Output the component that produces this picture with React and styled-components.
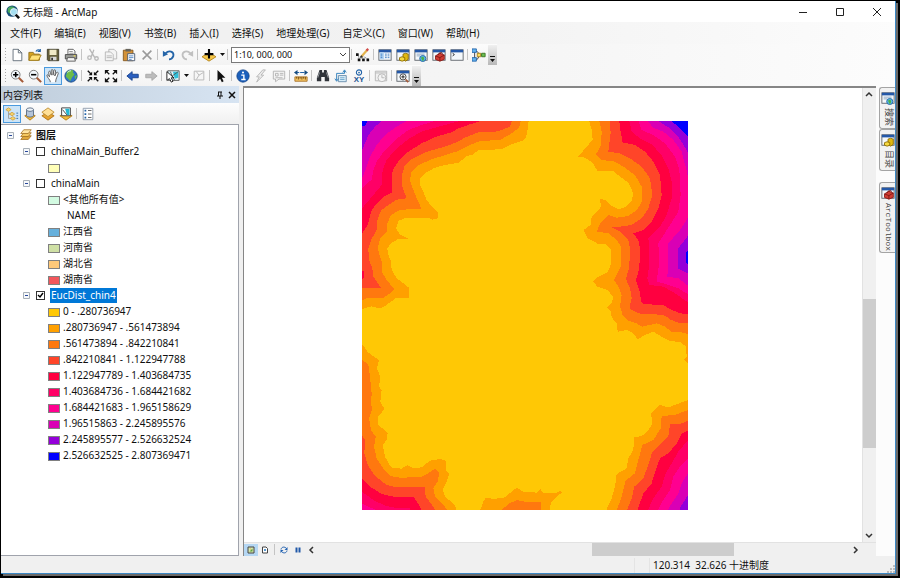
import React, { useState } from 'react';
import styled, { createGlobalStyle } from 'styled-components';

const GlobalStyle = createGlobalStyle`
  * {
    box-sizing: border-box;
  }

  body {
    margin: 0;
    background: #000000;
    color: #101010;
    font-family: 'Noto Sans', 'Noto Sans CJK SC', sans-serif;
    font-size: 10px;
    line-height: 16px;
  }

  button,
  select,
  input {
    margin: 0;
    padding: 0;
    border: none;
    background: none;
    color: inherit;
    font: inherit;
  }
`;

const Desktop = styled.div`
  height: 100vh;
  padding: 1px 4px 4px 1px;
  background: #000000;
`;

const Window = styled.div`
  display: flex;
  flex-direction: column;
  height: 100%;
  background: #f0f0f0;
  border-right: 1px solid #3a87c4;
  border-bottom: 1px solid #3a87c4;
  box-shadow: 2px 2px 0 #6a6a6a;
`;

const TitleBar = styled.header`
  display: flex;
  align-items: center;
  height: 21px;
  padding-left: 5px;
  gap: 3px;
  background: #ffffff;
`;

const Title = styled.h1`
  flex: 1;
  margin: 0;
  font-size: 10px;
  font-weight: 400;
`;

const WindowControls = styled.div`
  display: flex;
`;

const WindowButton = styled.button`
  display: flex;
  align-items: center;
  justify-content: center;
  width: 37px;
  height: 20px;
`;

const MenuBar = styled.nav`
  display: flex;
  align-items: center;
  gap: 1px;
  height: 22px;
  padding-left: 3px;
  background: linear-gradient(to right, #f0f0f0, #f2f2f2 50%, #fcfcfc);
`;

const MenuItem = styled.button`
  padding: 0 6px;
  white-space: nowrap;
`;

const ToolbarArea = styled.div`
  background: linear-gradient(to right, #f2f2f2, #f4f4f4 50%, #fcfcfc);
`;

const ToolbarRow = styled.div`
  display: flex;
  align-items: center;
  width: max-content;
  height: 21px;
  background: linear-gradient(to bottom, #fcfcfc, #f3f3f3);
`;

const Grip = styled.span`
  width: 7px;
  height: 14px;
  border-left: 4px solid transparent;
  background: repeating-linear-gradient(to bottom, #a8a8a8 0 1px, transparent 1px 3px) 0 0 / 1px 100% no-repeat;
`;

const Separator = styled.span`
  width: 1px;
  height: 11px;
  margin: 0 2px 0 ${(props) => (props.$wide ? '2px' : '1px')};
  background: #c4c4c4;
`;

const ToolButton = styled.button`
  display: flex;
  align-items: center;
  justify-content: center;
  width: 18px;
  height: 18px;
  border: 1px solid ${(props) => (props.$active ? '#4a9ade' : 'transparent')};
  background: ${(props) => (props.$active ? '#cce4f7' : 'transparent')};
`;

const CaretButton = styled.button`
  display: flex;
  align-items: center;
  justify-content: center;
  width: 8px;
  height: 18px;
`;

const OverflowButton = styled.button`
  display: flex;
  align-items: flex-end;
  justify-content: center;
  width: 9px;
  height: 20px;
  padding-bottom: 2px;
  background: linear-gradient(to bottom, #f0f0f0, #b8b8b8);
`;

const ScaleBox = styled.select`
  appearance: none;
  width: 119px;
  height: 16px;
  margin-left: 1px;
  padding-left: 2px;
  border: 1px solid #7a7a7a;
  background: #ffffff
    url("data:image/svg+xml,%3Csvg xmlns='http://www.w3.org/2000/svg' width='8' height='5'%3E%3Cpath d='M1 1l3 3 3-3' fill='none' stroke='%23444'/%3E%3C/svg%3E")
    no-repeat right 2px center;
  font-size: 9px;
  line-height: 14px;
`;

const Workspace = styled.main`
  display: flex;
  flex: 1;
  min-height: 0;
`;

const ContentsPanel = styled.aside`
  display: flex;
  flex-direction: column;
  flex: none;
  width: 238px;
`;

const PanelHeader = styled.header`
  display: flex;
  align-items: center;
  height: 17px;
  padding: 0 1px 0 2px;
  background: linear-gradient(to right, #bfcddb, #d7e4f2);
`;

const PanelTitle = styled.h2`
  flex: 1;
  margin: 0;
  font-size: 10px;
  font-weight: 400;
`;

const PanelButton = styled.button`
  display: flex;
  align-items: center;
  justify-content: center;
  width: 12px;
  height: 14px;
`;

const PanelTools = styled.div`
  display: flex;
  align-items: center;
  height: 21px;
  padding-left: 2px;
  background: linear-gradient(to bottom, #fdfdfd, #f0f0f0);
`;

const Tree = styled.div`
  flex: 1;
  min-height: 0;
  padding-top: 2px;
  overflow: hidden;
  border: 1px solid #a0a3ac;
  border-left: none;
  background: #ffffff;
`;

const TreeRow = styled.div`
  display: flex;
  align-items: center;
  height: 16px;
  padding-left: ${(props) => props.$indent}px;
  white-space: nowrap;
`;

const Expander = styled.button`
  display: flex;
  width: 7px;
  height: 7px;
  margin-right: 6px;
`;

const RootLabel = styled.span`
  margin-left: 4px;
  font-weight: 700;
`;

const LayerCheck = styled.input`
  appearance: none;
  width: 9px;
  height: 9px;
  border: 1px solid #333333;
  background: #ffffff;

  &:checked {
    background: #ffffff
      url("data:image/svg+xml,%3Csvg xmlns='http://www.w3.org/2000/svg' width='7' height='7'%3E%3Cpath d='M1 3l2 2 3-4' fill='none' stroke='%23000' stroke-width='1.4'/%3E%3C/svg%3E")
      no-repeat center;
  }
`;

const LayerLabel = styled.label`
  height: 15px;
  margin-left: 5px;
  padding: 0 1px;
  line-height: 15px;
  color: ${(props) => (props.$selected ? '#ffffff' : 'inherit')};
  background: ${(props) => (props.$selected ? '#0078d7' : 'transparent')};
`;

const Swatch = styled.span`
  width: 12px;
  height: 9px;
  margin: 2px 3px 0 0;
  border: 1px solid #808080;
  background: ${(props) => props.$color};
`;

const MapPane = styled.section`
  display: flex;
  flex-direction: column;
  flex: 1;
  min-width: 0;
  margin-left: 4px;
  border-top: 2px solid #868686;
  border-left: 1px solid #868686;
`;

const MapRow = styled.div`
  display: flex;
  flex: 1;
  min-height: 0;
`;

const MapCanvas = styled.div`
  flex: 1;
  min-width: 0;
  padding: 33px 0 0 118px;
  overflow: hidden;
  background: #ffffff;
`;

const Raster = styled.svg`
  display: block;
  width: 326px;
  height: 389px;
`;

const VerticalBar = styled.div`
  display: flex;
  flex-direction: column;
  width: 14px;
  border-left: 1px solid #e2e2e2;
`;

const BottomBar = styled.div`
  display: flex;
  align-items: center;
  height: 14px;
  padding-right: 14px;
  border-top: 1px solid #e2e2e2;
`;

const BarArrow = styled.button`
  display: flex;
  align-items: center;
  justify-content: center;
  flex: none;
  width: 12px;
  height: 12px;
`;

const Track = styled.div`
  flex: ${(props) => props.$grow};
`;

const Thumb = styled.div`
  flex: ${(props) => props.$grow};
  align-self: stretch;
  background: #cdcdcd;
`;

const ViewButton = styled.button`
  display: flex;
  align-items: center;
  justify-content: center;
  width: 14px;
  height: 12px;
  background: ${(props) => (props.$active ? '#b5d7f3' : 'transparent')};
`;

const Dock = styled.aside`
  display: flex;
  flex-direction: column;
  align-items: flex-end;
  flex: none;
  width: 19px;
  padding-top: 1px;
  background: #fcfcfc;
`;

const DockTab = styled.button`
  display: flex;
  flex-direction: column;
  align-items: center;
  gap: 3px;
  width: 16px;
  height: ${(props) => props.$length}px;
  margin-top: ${(props) => (props.$apart ? '11px' : '0')};
  padding-top: 3px;
  border: 1px solid #a4a4a4;
  border-right: none;
  border-radius: 3px 0 0 3px;
  background: #f2f2f2;
`;

const DockLabel = styled.span`
  writing-mode: vertical-rl;
  text-orientation: sideways;
  color: #444444;
  font-family: 'Liberation Mono', 'Noto Sans CJK SC', monospace;
  font-size: ${(props) => (props.$latin ? '8px' : '9px')};
  line-height: 12px;
`;

const StatusBar = styled.footer`
  display: flex;
  align-items: flex-end;
  height: 17px;
  background: #f0f0f0;
`;

const StatusSpacer = styled.div`
  flex: 1;
`;

const StatusCell = styled.div`
  width: 16px;
  height: 15px;
  border: 1px solid #e4e4e4;
  border-width: 0 1px;
`;

const StatusText = styled.output`
  width: 237px;
  padding-left: 3px;
  line-height: 15px;
  white-space: pre;
`;

const COLORS = ['#ffc805', '#ffa000', '#ff780f', '#ff4529', '#ff0040', '#ff0066', '#ff0090', '#d900b5', '#9400d9', '#0000ff'];

const RANGES = [
  '0 - .280736947',
  '.280736947 - .561473894',
  '.561473894 - .842210841',
  '.842210841 - 1.122947788',
  '1.122947789 - 1.403684735',
  '1.403684736 - 1.684421682',
  '1.684421683 - 1.965158629',
  '1.96515863 - 2.245895576',
  '2.245895577 - 2.526632524',
  '2.526632525 - 2.807369471',
];

const PROVINCES = [
  ['江西省', '#66b0dc'],
  ['河南省', '#cfe0a5'],
  ['湖北省', '#ffc97a'],
  ['湖南省', '#f2575c'],
];

const MENUS = ['文件(F)', '编辑(E)', '视图(V)', '书签(B)', '插入(I)', '选择(S)', '地理处理(G)', '自定义(C)', '窗口(W)', '帮助(H)'];

// Distance bands, one list per corner; entries are [class index, points]
const TOP_LEFT = [
  [1, '21,18 521,18 517,50 513,68 505,76 470,88 440,102 400,105 370,105 355,118 335,123 312,143 270,150 240,158 215,172 195,190 195,210 205,230 215,255 235,280 248,292 248,310 232,314 220,309 150,309 130,318 123,340 135,358 150,366 162,373 130,372 108,385 97,400 100,420 108,440 110,465 125,490 145,505 162,518 162,548 125,548 105,562 85,577 70,579 50,574 21,582'],
  [2, '21,18 497,18 492,38 470,55 435,75 375,78 340,92 310,108 265,122 230,133 190,150 170,170 165,195 175,225 185,250 200,282 175,283 135,284 108,300 97,325 95,350 75,372 68,400 75,425 82,445 80,470 95,495 117,522 105,535 85,548 40,548 21,556'],
  [3, '21,18 470,18 465,35 440,45 420,50 370,52 330,68 305,82 270,95 210,112 170,133 148,155 140,185 142,215 155,250 125,254 100,270 80,285 68,310 65,345 48,375 40,400 42,435 52,460 55,485 78,518 21,519'],
  [4, '21,18 378,18 345,28 310,40 290,52 240,66 200,85 160,110 130,140 113,165 110,200 112,233 90,243 65,265 48,290 38,330 21,355'],
  [4, '21,468 27,470 27,490 21,492'],
  [5, '21,18 315,18 250,35 200,50 160,72 120,105 95,135 83,165 80,210 55,240 40,258 21,280'],
  [6, '21,18 240,18 200,30 160,45 120,75 90,105 65,140 55,165 50,195 35,205 21,222'],
  [7, '21,18 155,18 125,35 90,60 65,90 45,125 33,160 21,190'],
  [8, '21,18 80,18 60,35 40,60 30,85 21,105'],
  [9, '21,18 38,18 30,32 21,35'],
];

const TOP_RIGHT = [
  [1, '504,18 208,18 215,45 218,75 200,95 175,125 195,128 220,145 232,168 280,168 300,185 325,203 340,235 335,258 318,275 295,283 270,270 255,255 240,252 243,275 232,290 215,305 212,330 190,345 203,370 220,378 235,388 258,388 273,405 272,450 262,472 235,485 220,500 232,515 262,525 280,545 275,565 262,577 273,590 275,607 290,625 293,650 320,645 340,655 353,673 375,660 400,650 425,665 450,679 480,680 498,695 500,725 492,735 504,745'],
  [2, '504,18 238,18 245,50 243,90 228,118 245,135 285,140 310,155 345,180 365,215 366,260 350,285 325,303 290,308 265,300 240,325 230,350 265,355 290,375 303,395 302,455 282,495 298,520 305,540 300,575 308,600 325,617 345,623 367,635 410,625 435,635 455,650 490,653 504,658'],
  [3, '504,18 270,18 272,55 265,110 300,115 330,130 365,155 390,190 397,240 385,280 365,310 335,330 300,335 275,337 300,350 325,375 330,400 328,455 318,492 330,520 335,550 328,580 345,590 365,598 400,597 435,602 450,613 475,623 504,625'],
  [4, '504,18 298,18 302,50 308,82 345,90 375,110 400,140 420,180 425,240 415,280 395,320 370,345 340,355 355,375 360,400 358,460 348,495 358,525 365,565 400,569 430,570 450,582 480,595 504,597'],
  [5, '504,18 328,18 335,50 360,70 395,88 425,120 445,160 455,200 455,250 440,300 420,335 385,370 388,400 387,455 382,490 388,510 430,515 465,535 504,562'],
  [6, '504,18 355,18 365,45 400,60 435,85 465,125 478,165 482,240 475,290 450,330 415,385 418,440 410,500 440,508 475,520 504,538'],
  [7, '504,18 383,18 400,38 430,50 460,75 485,110 498,160 504,185'],
  [7, '504,308 480,345 445,385 445,440 442,485 475,490 504,512'],
  [8, '504,18 415,18 450,40 475,65 504,112'],
  [8, '504,362 475,400 474,460 504,475'],
  [9, '504,18 455,18 480,40 504,65'],
  [9, '504,408 499,412 499,445 504,447'],
];

const BOTTOM_LEFT = [
  [1, '21,102 40,128 72,150 66,175 76,200 72,230 80,240 76,275 88,297 70,320 70,345 98,368 95,390 83,405 90,440 108,472 140,476 157,465 175,475 200,472 225,452 255,447 272,452 272,480 283,490 275,515 263,540 270,560 300,585 305,602 21,602'],
  [2, '21,148 40,165 45,200 50,250 48,280 52,297 42,325 48,360 62,380 57,410 65,445 85,475 105,498 140,504 160,502 200,500 220,490 240,476 253,490 248,515 235,535 240,560 262,580 278,602 21,602'],
  [3, '21,375 30,390 28,430 38,465 60,498 95,525 125,532 210,532 212,560 235,590 240,602 21,602'],
  [4, '21,505 45,530 80,552 125,562 175,560 190,582 200,602 21,602'],
  [5, '21,545 55,570 90,587 125,594 165,595 168,602 21,602'],
  [6, '21,580 45,592 70,602 21,602'],
  [1, '375,602 385,575 393,563 415,567 450,562 470,545 485,533 505,545 545,548 557,538 565,550 600,550 615,543 622,546 605,560 587,580 585,602'],
  [2, '438,602 460,582 485,570 510,575 557,575 559,602'],
];

const BOTTOM_RIGHT = [
  [1, '504,270 470,283 445,292 420,285 393,310 397,340 385,362 365,378 342,382 340,420 325,445 320,475 290,492 285,530 275,565 258,602 504,602'],
  [2, '504,300 465,315 425,318 422,355 400,390 367,405 355,450 345,490 317,512 305,560 290,602 504,602'],
  [3, '504,332 480,342 450,343 445,380 420,405 397,425 385,465 370,505 343,530 335,565 320,602 504,602'],
  [4, '504,362 485,370 470,400 445,430 420,445 407,480 395,520 370,550 352,602 504,602'],
  [5, '504,390 475,425 455,460 437,490 425,530 400,565 383,602 504,602'],
  [6, '504,445 480,470 460,500 450,540 430,570 412,602 504,602'],
  [7, '504,490 485,520 475,550 455,580 443,602 504,602'],
  [8, '504,555 485,585 477,602 504,602'],
];

const Bands = ({ x, y, items }) => (
  <g transform={`translate(${x} ${y})`}>
    {items.map(([level, points]) => (
      <polygon key={points} points={points} fill={COLORS[level]} />
    ))}
  </g>
);

const DistanceRaster = () => (
  <Raster viewBox="0 0 978 1167" shapeRendering="crispEdges" role="img" aria-label="EucDist_chin4">
    <rect width="978" height="1167" fill={COLORS[0]} />
    <Bands x={-21} y={-18} items={TOP_LEFT} />
    <Bands x={474} y={-18} items={TOP_RIGHT} />
    <Bands x={-21} y={567} items={BOTTOM_LEFT} />
    <Bands x={474} y={567} items={BOTTOM_RIGHT} />
  </Raster>
);

const Svg = ({ size = 14, box = 16, children }) => (
  <svg width={size} height={size} viewBox={`0 0 ${box} ${box}`} fill="none" aria-hidden="true">
    {children}
  </svg>
);

const WindowFrame = ({ children }) => (
  <>
    <rect x="1" y="2" width="14" height="12" fill="#f4f8fb" stroke="#5a6068" />
    <path d="M1 2h14v3H1z" fill="#2458a8" />
    {children}
  </>
);

const icons = {
  blank: <path d="M3.5 1.5h6l4 4v9h-10zM9.5 1.5v4h4" fill="#fff" stroke="#5c6874" />,
  open: (
    <>
      <path d="M1 14V5h5l1 2h6v7z" fill="#d9a520" stroke="#8a6a18" />
      <path d="M1 14l3-6h11l-3 6z" fill="#ffe27a" stroke="#a07a18" />
      <path d="M9 4c2-3 4-2 5 0m0-3v3h-3" stroke="#2464a8" strokeWidth="1.4" />
    </>
  ),
  save: (
    <>
      <path d="M1.5 1.5h13v13h-12l-1-1z" fill="#66603c" stroke="#3a3828" />
      <path d="M4 2h8v6H4z" fill="#efe9c8" />
      <path d="M5 10h7v4H5z" fill="#d8d8d8" />
      <path d="M6 11h2v3H6z" fill="#333" />
    </>
  ),
  print: (
    <>
      <path d="M4.5 7V1.5h6l2 2V7" fill="#fff" stroke="#555" />
      <path d="M6 4h4M6 6h5" stroke="#888" />
      <path d="M1.5 7.5h13v5h-13z" fill="#9a9c98" stroke="#444" />
      <path d="M4 11h8l1 4H3z" fill="#f4f4f4" stroke="#555" />
      <path d="M11 9h2" stroke="#f0dc50" strokeWidth="1.5" />
    </>
  ),
  cut: (
    <g stroke="#b8b8b8" strokeWidth="1.5">
      <path d="M4 1l6 10M9 2L6 10" />
      <circle cx="4" cy="11" r="2" />
      <circle cx="12" cy="12" r="2" />
    </g>
  ),
  copy: (
    <g fill="#f4f4f4" stroke="#b4b4b4">
      <path d="M5.5 1.5h6l3 3v8h-9z" />
      <path d="M1.5 4.5h6l3 3v7h-9zM3 9h6M3 11h6" />
    </g>
  ),
  paste: (
    <>
      <path d="M1.5 2.5h11v12h-11z" fill="#d39238" stroke="#80561e" />
      <path d="M4 1h6v3H4z" fill="#66645c" />
      <path d="M6.5 6.5h8v8h-8z" fill="#fff" stroke="#46566c" />
      <path d="M8 9h5M8 11h5M8 13h3" stroke="#4a80c0" />
    </>
  ),
  remove: <path d="M3 3l10 10M13 3L3 13" stroke="#9a9a9a" strokeWidth="1.8" />,
  undo: (
    <>
      <path d="M4 6c4-4 10-2 9 3-1 3-3 4-5 4" stroke="#2464a8" strokeWidth="2" />
      <path d="M1 3v7l6-3z" fill="#2464a8" />
    </>
  ),
  redo: (
    <>
      <path d="M12 6C8 2 2 4 3 9c1 3 3 4 5 4" stroke="#c0c0c0" strokeWidth="2" />
      <path d="M15 3v7L9 7z" fill="#c0c0c0" />
    </>
  ),
  addData: (
    <>
      <path d="M0 10l8-5 8 5-8 5z" fill="#f7c84a" stroke="#b08018" />
      <path d="M8 1v11M3 7h10" stroke="#000" strokeWidth="2.4" />
    </>
  ),
  edit: (
    <>
      <path d="M2 7l2 6 5-3 5 3" stroke="#555" strokeDasharray="1 1" />
      <path d="M0 6h3v3H0zM2 12h3v3H2zM7 12h3v3H7zM12 12h3v3h-3z" fill="#111" />
      <path d="M6 10l7-8" stroke="#e4b34c" strokeWidth="2.5" />
      <path d="M12 3l2-2" stroke="#d14b4b" strokeWidth="2.5" />
      <path d="M5 11l2-2" stroke="#333" strokeWidth="2" />
    </>
  ),
  contents: (
    <WindowFrame>
      <path d="M2 5h5v8H2z" fill="#b4d6f4" />
      <path d="M3 7h3M3 9h3M3 11h3M8 7h6M8 9h6M8 11h6" stroke="#3c7cc0" strokeDasharray="2 1" />
    </WindowFrame>
  ),
  catalog: (
    <WindowFrame>
      <path d="M8 7l3-1 3 1v6l-3 2-3-2z" fill="#e0b810" stroke="#8a6c04" />
      <path d="M4 11l3-1 3 1v3l-3 1-3-1z" fill="#f5d840" stroke="#8a6c04" />
    </WindowFrame>
  ),
  search: (
    <WindowFrame>
      <path d="M3 7h9M3 9h4" stroke="#8aa4c0" />
      <circle cx="10" cy="12" r="3.5" fill="#58b8e0" stroke="#2464a8" />
      <path d="M8 11c3-3 5 1 2 4z" fill="#4cb048" />
    </WindowFrame>
  ),
  toolbox: (
    <WindowFrame>
      <path d="M4 9l5-3 5 2v5l-5 2-5-2z" fill="#d23c32" stroke="#8c1c18" />
      <path d="M4 9l5 2 5-3M9 11v4M7 8l1-2 3-1 1 2" stroke="#7c1814" />
    </WindowFrame>
  ),
  python: (
    <WindowFrame>
      <path d="M3 6l2 1.5L3 9" stroke="#111" />
    </WindowFrame>
  ),
  model: (
    <>
      <path d="M3 3v10M3 4h3l3 4h4M3 13h3l3-5" stroke="#333" />
      <path d="M0 1h5v4H0zM0 11h5v4H0z" fill="#66b5f0" stroke="#2464a8" />
      <path d="M6 6h4v4H6z" fill="#ffe060" stroke="#a07a18" />
      <path d="M11 6h4v4h-4z" fill="#6ac050" stroke="#387020" />
    </>
  ),
  zoomIn: (
    <>
      <circle cx="6.5" cy="6.5" r="5" fill="#f2f8fd" stroke="#6e6e6e" />
      <path d="M10 10l5 5" stroke="#a45a38" strokeWidth="2.4" />
      <path d="M3.5 6.5h6M6.5 3.5v6" stroke="#000" strokeWidth="1.8" />
    </>
  ),
  zoomOut: (
    <>
      <circle cx="6.5" cy="6.5" r="5" fill="#f2f8fd" stroke="#6e6e6e" />
      <path d="M10 10l5 5" stroke="#a45a38" strokeWidth="2.4" />
      <path d="M3.5 6.5h6" stroke="#000" strokeWidth="1.8" />
    </>
  ),
  pan: (
    <path
      d="M5 15c0-3-4-5-4-8 1-1 2 0 3 2L3 4c0-2 2-2 2 0l1 3V2c0-2 2-2 2 0v5l1-5c0-2 2-1 2 0l-1 6 2-4c1-1 2 0 2 1-1 4-3 6-3 10"
      fill="#fff"
      stroke="#555"
    />
  ),
  globe: (
    <>
      <circle cx="8" cy="8" r="7" fill="#2f74c8" stroke="#1c4a84" />
      <path d="M5 2c4-2 7 0 5 2l2 2-3 4-2 4C6 11 2 10 2 7c2 0 0-4 3-5zM12 8l3-1-2 5z" fill="#6cbc48" />
      <path d="M4 4c1-1 2-2 4-2" stroke="#e4f2ff" />
    </>
  ),
  shrink: (
    <g>
      <path d="M2 2l4 4M14 2l-4 4M2 14l4-4M14 14l-4-4" stroke="#111" strokeWidth="1.6" />
      <path d="M7 3v4H3zM9 3v4h4zM7 13V9H3zM9 13V9h4z" fill="#111" />
    </g>
  ),
  grow: (
    <g>
      <path d="M3 3l3 3M13 3l-3 3M3 13l3-3M13 13l-3-3" stroke="#111" strokeWidth="1.6" />
      <path d="M1 6V1h5zM15 6V1h-5zM1 10v5h5zM15 10v5h-5z" fill="#111" />
    </g>
  ),
  back: <path d="M1 8l6-5v3h7v4H7v3z" fill="#2a5fc0" stroke="#16408c" />,
  forward: <path d="M15 8L9 3v3H2v4h7v3z" fill="#bcbcbc" stroke="#a8a8a8" />,
  selectFeatures: (
    <>
      <path d="M2 2h13v11H2z" fill="#dff4fa" stroke="#555" />
      <path d="M8 3h6v7l-4 1z" fill="#30c0d8" />
      <path d="M5 3l2 5 7-5M7 8l3 5" stroke="#555" />
      <path d="M1 3v10l3-2 2 4 2-1-2-4h3z" fill="#fff" stroke="#111" />
    </>
  ),
  clear: <path d="M2.5 2.5h11v10h-11zM5 3l3 4 5-3M8 7l-3 5" fill="#f6f6f6" stroke="#b4b4b4" />,
  pointer: <path d="M4 1v13l3-3 2 4 2-1-2-4h4z" fill="#111" />,
  identify: (
    <>
      <circle cx="8" cy="8" r="7" fill="#1c60bc" stroke="#12458c" />
      <path d="M6 7h3v5M6 12h5" stroke="#fff" strokeWidth="1.6" />
      <circle cx="8" cy="4" r="1.2" fill="#fff" />
    </>
  ),
  lightning: <path d="M10 1L3 9h3l-3 6 8-8H8l5-6z" fill="#ececec" stroke="#b4b4b4" />,
  popup: (
    <g stroke="#b0b0b0">
      <path d="M1.5 2.5h13v9H8l-4 3v-3H1.5z" fill="#f4f4f4" />
      <path d="M4 5h3v3H4zM9 5h4M9 7h4M4 10h8" />
    </g>
  ),
  measure: (
    <>
      <path d="M1 4h14" stroke="#2464a8" strokeWidth="1.4" strokeDasharray="5 1" />
      <path d="M0 4l4-3v6zM16 4l-4-3v6z" fill="#164c80" />
      <path d="M1 9h14v5H1z" fill="#f0c060" stroke="#aa7428" />
      <path d="M3 9v2M5 9v3M7 9v2M9 9v3M11 9v2M13 9v3" stroke="#704810" />
    </>
  ),
  binoculars: (
    <>
      <path d="M4 1h3v3h2V1h3l3 9v4h-5V9H6v5H1v-4z" fill="#30343a" />
      <path d="M4 4l-2 6M12 4l2 6" stroke="#a0a4a8" />
    </>
  ),
  route: (
    <>
      <path d="M5 7.5h9v7H5z" fill="#d8edf8" stroke="#6488a8" />
      <path d="M3 13V5h9V2M10 4l2-3 2 3M1 11l2 3 2-3" stroke="#2478b8" />
      <path d="M7 10h5M7 12h5" stroke="#6ca4cc" />
    </>
  ),
  goToXY: (
    <>
      <circle cx="8" cy="4" r="3" stroke="#2464a8" strokeWidth="1.2" />
      <circle cx="8" cy="4" r="1" fill="#2464a8" />
      <text x="8" y="15" textAnchor="middle" fill="#1c5494" fontSize="9" fontWeight="700" fontFamily="Liberation Sans, sans-serif">
        XY
      </text>
    </>
  ),
  time: (
    <g stroke="#b4b4b4">
      <path d="M1.5 2.5h13v11h-13zM2 4.5h12" fill="#f0f0f0" />
      <circle cx="9" cy="10" r="4.5" fill="#f4f4f4" />
      <path d="M9 7v3h3" />
    </g>
  ),
  viewer: (
    <WindowFrame>
      <circle cx="8" cy="9" r="3.5" fill="#fff" stroke="#333" />
      <path d="M6 9h4M8 7v4" stroke="#111" />
      <path d="M11 12l3 3" stroke="#a45a38" strokeWidth="2" />
    </WindowFrame>
  ),
  drawOrder: (
    <>
      <path d="M4 5v8h5M4 8h5" stroke="#999" />
      <path d="M1 3l3-2 3 2-3 2zM5 8l3-2 3 2-3 2zM6 13l3-2 3 2-3 2z" fill="#f8d468" stroke="#d0a444" />
      <path d="M13 7h2M13 10h2M13 13h2" stroke="#2464a8" />
    </>
  ),
  source: (
    <>
      <path d="M2 10l6-3 6 3-6 5z" fill="#f2b93c" stroke="#b07c18" />
      <path d="M4 3v7c1 2 7 2 8 0V3z" fill="#b4c4d8" stroke="#566880" />
      <ellipse cx="8" cy="3" rx="4" ry="2" fill="#edf3f8" stroke="#566880" />
    </>
  ),
  layers: (
    <>
      <path d="M1 10l7-4 7 4-7 5z" fill="#e6a330" stroke="#a87018" />
      <path d="M1 6l7-5 7 5-7 5z" fill="#ffe098" stroke="#bc8a2c" />
    </>
  ),
  bySelection: (
    <>
      <path d="M1 10l7-3 7 3-7 5z" fill="#f2b93c" stroke="#b07c18" />
      <path d="M3 1h10v9H3z" fill="#fff" stroke="#333" />
      <path d="M7 2h5v7H9z" fill="#22b8d4" />
      <path d="M4 3l5 6" stroke="#333" />
    </>
  ),
  options: (
    <>
      <path d="M2.5 1.5h11v13h-11z" fill="#fff" stroke="#8c98a8" />
      <path d="M4 3h2v2H4zM4 7h2v2H4zM4 11h2v2H4z" fill="#2464a8" />
      <path d="M8 4h4M8 8h4M8 12h4" stroke="#555" />
    </>
  ),
  dataFrame: (
    <>
      <path d="M1 14l4-5h10l-4 5z" fill="#e0a83c" stroke="#a06c1c" />
      <path d="M1 10l4-5h10l-4 5z" fill="#f4c860" stroke="#a06c1c" />
      <path d="M1 6l4-5h10l-4 5z" fill="#ffe6a4" stroke="#a06c1c" />
    </>
  ),
  dataView: (
    <>
      <path d="M2 2h12v12H2z" fill="#d9e8b0" stroke="#444" strokeWidth="2" />
      <path d="M5 11l6-6v6z" fill="#5da040" />
      <path d="M5 5h3v3z" fill="#e2b050" />
    </>
  ),
  layoutView: (
    <>
      <path d="M3 2h7l3 3v9H3z" fill="#fff" stroke="#444" strokeWidth="2" />
      <path d="M6 6h4v4H6z" fill="#5898d0" />
    </>
  ),
  refresh: (
    <>
      <path d="M2 7c1-6 8-6 11-2M14 9c-1 6-8 6-11 2" stroke="#2060b0" strokeWidth="2" />
      <path d="M15 2v6H9zM1 14V8h6z" fill="#2060b0" />
    </>
  ),
  pause: <path d="M3 3h4v10H3zM9 3h4v10H9z" fill="#2058a8" />,
};

const FILE_TOOLS = [
  ['blank', '新建'], ['open', '打开'], ['save', '保存'], ['print', '打印'], '|',
  ['cut', '剪切'], ['copy', '复制'], ['paste', '粘贴'], ['remove', '删除'], '|',
  ['undo', '撤消'], ['redo', '恢复'], '|',
  ['addData', '添加数据'], 'v', '|',
];

const WINDOW_TOOLS = [
  '|', ['edit', '编辑器工具条'], '|',
  ['contents', '内容列表'], ['catalog', '目录'], ['search', '搜索'], ['toolbox', 'ArcToolbox'], ['python', 'Python'], '|',
  ['model', '模型构建器'],
];

const NAV_TOOLS = [
  ['zoomIn', '放大'], ['zoomOut', '缩小'], ['pan', '平移'], ['globe', '全图'], '|',
  ['shrink', '固定比例放大'], ['grow', '固定比例缩小'], '|',
  ['back', '上一视图'], ['forward', '下一视图'], '|',
  ['selectFeatures', '选择要素'], 'v', ['clear', '清除所选'], '|',
  ['pointer', '选择元素'], '|',
  ['identify', '识别'], ['lightning', '超链接'], ['popup', 'HTML 弹出窗口'], '|',
  ['measure', '测量'], '|',
  ['binoculars', '查找'], ['route', '查找路径'], ['goToXY', '转到 XY'], '|',
  ['time', '时间滑块'], '|',
  ['viewer', '创建查看器窗口'],
];

const CONTENTS_TOOLS = [
  ['drawOrder', '按绘制顺序列出'], ['source', '按源列出'], ['layers', '按可见性列出'], ['bySelection', '按选择列出'], '|',
  ['options', '选项'],
];

const Caret = () => (
  <svg width="5" height="3" viewBox="0 0 5 3" aria-hidden="true">
    <path d="M0 0h5L2.5 3z" fill="#111" />
  </svg>
);

const Tools = ({ items, active, onPick }) =>
  items.map((item, idx) => {
    if (item === '|') return <Separator key={idx} />;
    if (item === 'v') {
      return (
        <CaretButton key={idx} aria-label="更多">
          <Caret />
        </CaretButton>
      );
    }
    const [name, label] = item;
    return (
      <ToolButton key={name} aria-label={label} $active={active === name} onClick={() => onPick && onPick(name)}>
        <Svg>{icons[name]}</Svg>
      </ToolButton>
    );
  });

const Overflow = () => (
  <OverflowButton aria-label="工具条选项">
    <svg width="5" height="7" viewBox="0 0 5 7" aria-hidden="true">
      <path d="M0 0h5v1H0zM0 3h5L2.5 6z" fill="#111" />
    </svg>
  </OverflowButton>
);

const ARROWS = {
  up: 'M1 6l3-3 3 3',
  down: 'M1 2l3 3 3-3',
  left: 'M6 1L3 4l3 3',
  right: 'M2 1l3 3-3 3',
};

const Arrow = ({ to, label }) => (
  <BarArrow aria-label={label}>
    <Svg size={8} box={8}>
      <path d={ARROWS[to]} stroke="#333" strokeWidth="1.5" />
    </Svg>
  </BarArrow>
);

const Collapse = () => (
  <Expander aria-label="折叠">
    <Svg size={7} box={7}>
      <path d="M.5.5h6v6h-6z" fill="#f6f8fa" stroke="#a8b0b8" />
      <path d="M2 3.5h3" stroke="#28489c" />
    </Svg>
  </Expander>
);

const Layer = ({ id, name, checked, selected, onToggle }) => (
  <TreeRow $indent={22}>
    <Collapse />
    <LayerCheck type="checkbox" id={id} checked={checked} onChange={onToggle} />
    <LayerLabel htmlFor={id} $selected={selected}>
      {name}
    </LayerLabel>
  </TreeRow>
);

const App = () => {
  const [tool, setTool] = useState('pan');
  const [listing, setListing] = useState('drawOrder');
  const [visible, setVisible] = useState({ buffer: false, main: false, dist: true });

  const toggle = (key) => setVisible((prev) => ({ ...prev, [key]: !prev[key] }));

  return (
    <>
      <GlobalStyle />
      <Desktop>
        <Window>
          <TitleBar>
            <Svg>
              <circle cx="7" cy="7" r="6.5" fill="#174f78" />
              <path d="M2 4c2-3 6-3 8-1l-3 3-2 4-3-2z" fill="#48a860" />
              <circle cx="9" cy="8" r="4" fill="#a5def0" stroke="#e8f4fa" />
              <path d="M11 11l4 4" stroke="#111" strokeWidth="3" />
            </Svg>
            <Title>无标题 - ArcMap</Title>
            <WindowControls>
              <WindowButton aria-label="最小化">
                <Svg size={10} box={10}>
                  <path d="M1 5.5h8" stroke="#222" />
                </Svg>
              </WindowButton>
              <WindowButton aria-label="最大化">
                <Svg size={10} box={10}>
                  <path d="M1.5 1.5h7v7h-7z" stroke="#222" />
                </Svg>
              </WindowButton>
              <WindowButton aria-label="关闭">
                <Svg size={10} box={10}>
                  <path d="M1 1l8 8M9 1L1 9" stroke="#222" />
                </Svg>
              </WindowButton>
            </WindowControls>
          </TitleBar>

          <MenuBar>
            {MENUS.map((menu) => (
              <MenuItem key={menu}>{menu}</MenuItem>
            ))}
          </MenuBar>

          {/* Toolbars */}
          <ToolbarArea>
            <ToolbarRow>
              <Grip />
              <Tools items={FILE_TOOLS} />
              <ScaleBox aria-label="地图比例" defaultValue="1:10, 000, 000">
                <option>1:10, 000, 000</option>
                <option>1:1, 000, 000</option>
              </ScaleBox>
              <Tools items={WINDOW_TOOLS} />
              <Overflow />
            </ToolbarRow>
            <ToolbarRow>
              <Grip />
              <Tools items={NAV_TOOLS} active={tool} onPick={setTool} />
              <Overflow />
            </ToolbarRow>
          </ToolbarArea>

          <Workspace>
            {/* Table of contents */}
            <ContentsPanel>
              <PanelHeader>
                <PanelTitle>内容列表</PanelTitle>
                <PanelButton aria-label="自动隐藏">
                  <Svg size={8} box={8}>
                    <path d="M2 1h4M2.5 1v4M5 1v4M1 5h6M4 5v3" stroke="#111" />
                  </Svg>
                </PanelButton>
                <PanelButton aria-label="关闭">
                  <Svg size={8} box={8}>
                    <path d="M1 1l6 6M7 1L1 7" stroke="#111" strokeWidth="1.5" />
                  </Svg>
                </PanelButton>
              </PanelHeader>
              <PanelTools>
                <Tools items={CONTENTS_TOOLS} active={listing} onPick={setListing} />
              </PanelTools>
              <Tree>
                <TreeRow $indent={6}>
                  <Collapse />
                  <Svg size={12}>{icons.dataFrame}</Svg>
                  <RootLabel>图层</RootLabel>
                </TreeRow>
                <Layer id="buffer" name="chinaMain_Buffer2" checked={visible.buffer} onToggle={() => toggle('buffer')} />
                <TreeRow $indent={47}>
                  <Swatch $color="#ffffb8" />
                </TreeRow>
                <Layer id="main" name="chinaMain" checked={visible.main} onToggle={() => toggle('main')} />
                <TreeRow $indent={47}>
                  <Swatch $color="#d3fbe2" />
                  &lt;其他所有值&gt;
                </TreeRow>
                <TreeRow $indent={66}>NAME</TreeRow>
                {PROVINCES.map(([name, color]) => (
                  <TreeRow key={name} $indent={47}>
                    <Swatch $color={color} />
                    {name}
                  </TreeRow>
                ))}
                <Layer id="dist" name="EucDist_chin4" checked={visible.dist} selected onToggle={() => toggle('dist')} />
                {RANGES.map((range, idx) => (
                  <TreeRow key={range} $indent={47}>
                    <Swatch $color={COLORS[idx]} />
                    {range}
                  </TreeRow>
                ))}
              </Tree>
            </ContentsPanel>

            {/* Map view */}
            <MapPane>
              <MapRow>
                <MapCanvas>{visible.dist && <DistanceRaster />}</MapCanvas>
                <VerticalBar>
                  <Arrow to="up" label="向上" />
                  <Track $grow={196} />
                  <Thumb $grow={147} />
                  <Track $grow={81} />
                  <Arrow to="down" label="向下" />
                </VerticalBar>
              </MapRow>
              <BottomBar>
                <ViewButton $active aria-label="数据视图">
                  <Svg size={8}>{icons.dataView}</Svg>
                </ViewButton>
                <ViewButton aria-label="布局视图">
                  <Svg size={8}>{icons.layoutView}</Svg>
                </ViewButton>
                <Separator $wide />
                <ViewButton aria-label="刷新">
                  <Svg size={8}>{icons.refresh}</Svg>
                </ViewButton>
                <ViewButton aria-label="暂停">
                  <Svg size={8}>{icons.pause}</Svg>
                </ViewButton>
                <Arrow to="left" label="向左" />
                <Track $grow={273} />
                <Thumb $grow={142} />
                <Track $grow={115} />
                <Arrow to="right" label="向右" />
              </BottomBar>
            </MapPane>

            <Dock>
              <DockTab $length={42}>
                <Svg>{icons.search}</Svg>
                <DockLabel>搜索</DockLabel>
              </DockTab>
              <DockTab $length={42}>
                <Svg>{icons.catalog}</Svg>
                <DockLabel>目录</DockLabel>
              </DockTab>
              <DockTab $length={71} $apart>
                <Svg>{icons.toolbox}</Svg>
                <DockLabel $latin>ArcToolbox</DockLabel>
              </DockTab>
            </Dock>
          </Workspace>

          <StatusBar>
            <StatusSpacer />
            <StatusCell />
            <StatusText>120.314  32.626 十进制度</StatusText>
            <Svg size={8} box={8}>
              <path d="M6 0h2v2H6zM3 3h2v2H3zM6 3h2v2H6zM0 6h2v2H0zM3 6h2v2H3zM6 6h2v2H6z" fill="#bcbcbc" />
            </Svg>
          </StatusBar>
        </Window>
      </Desktop>
    </>
  );
};

export default App;
